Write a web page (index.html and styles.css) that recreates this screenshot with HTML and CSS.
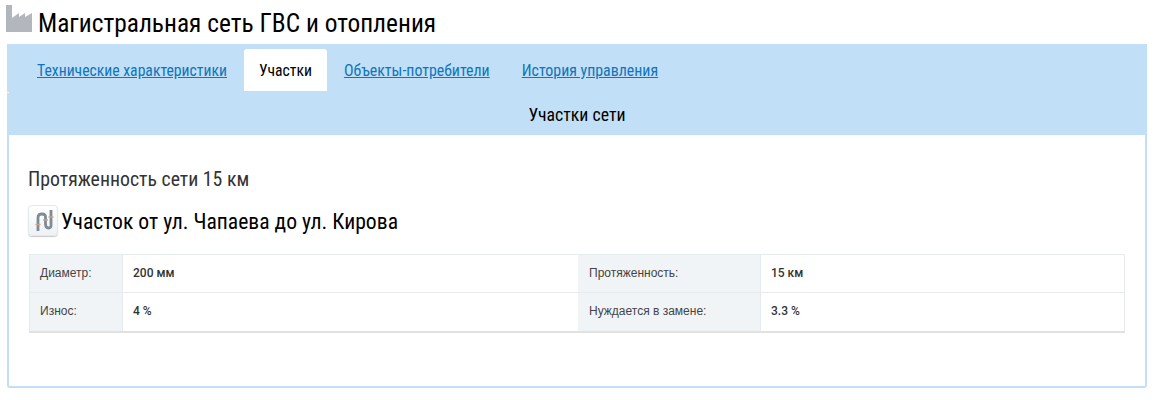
FILE: index.html
```html
<!DOCTYPE html>
<html lang="ru">
<head>
<meta charset="utf-8">
<title>Магистральная сеть ГВС и отопления</title>
<link rel="stylesheet" href="styles.css">
</head>
<body>
<header class="title">
  <svg class="factory" width="26" height="27" viewBox="0 0 26 27"><path fill="#b1b7bc" d="M0 0H6V13L13 8V12L19 8V12L26 8V27H0Z"/></svg>
  <h1>Магистральная сеть ГВС и отопления</h1>
</header>
<main class="panel">
  <nav class="tabs">
    <a class="tab" href="#">Технические характеристики</a>
    <span class="tab active">Участки</span>
    <a class="tab wide" href="#">Объекты-потребители</a>
    <a class="tab wide" href="#">История управления</a>
  </nav>
  <div class="band">Участки сети</div>
  <section class="content">
    <h2>Протяженность сети 15 км</h2>
    <div class="section-head">
      <span class="pipe"><svg width="22" height="24" viewBox="0 0 22 24" fill="none" stroke="#7d8b97" stroke-width="2.800"><path d="M6 22V9Q6 5 10 5T13.500 9V15Q13.500 19 16.500 19T19 15V1"/><path d="M3.500 15.500H8.500M11 11H16M16.500 8H21.500" stroke="#c9a488" stroke-width="1.500"/></svg></span>
      <h3>Участок от ул. Чапаева до ул. Кирова</h3>
    </div>
    <div class="info">
      <div class="k">Диаметр:</div><div class="v">200 мм</div><div class="k second">Протяженность:</div><div class="v">15 км</div>
      <div class="k">Износ:</div><div class="v">4 %</div><div class="k second">Нуждается в замене:</div><div class="v">3.3 %</div>
    </div>
  </section>
</main>
</body>
</html>
```
FILE: styles.css
```css
* { box-sizing: border-box; }
html, body { margin: 0; }
body { background: #fff; font-family: "Roboto Condensed", Roboto, sans-serif; color: #000; height: 400px; overflow: hidden; }
.title { display: flex; align-items: center; height: 44px; padding: 2px 0 0 6px; gap: 6px; }
.factory { flex: none; align-self: flex-start; margin-top: 3px; }
h1 { margin: 0; font-size: 25.4px; font-weight: 400; font-stretch: 75%; line-height: 36px; }
.panel { margin: 0 9px 0 7px; height: 344px; border: 2px solid #c1dff6; border-top: 0; border-radius: 0 0 3px 3px; }
.tabs { display: flex; gap: 2px; height: 49px; padding: 5px 0 0 15px; background: #c1dff6; margin: 0 -2px; }
.tab { display: block; height: 42px; line-height: 43px; padding: 0 15px; font-size: 15.7px; font-stretch: 75%; color: #0f75bc; }
.tab.wide { font-size: 15.9px; }
.tab.active { background: #fff; color: #000; border-radius: 3px 3px 0 0; }
.band { position: relative; height: 42px; margin: 0 -2px; background: #c1dff6; text-align: center; font-size: 17.8px; font-stretch: 75%; line-height: 44px; }
.band::before { content: ""; position: absolute; left: 0; top: -1px; width: 2px; height: 1px; background: #fff; }
.content { padding: 31px 20px 0 20px; margin-left: -1px; }
h2 { margin: 0; font-size: 19.8px; font-weight: 400; font-stretch: 75%; color: #333; line-height: 28px; }
.section-head { display: flex; align-items: center; gap: 3px; margin-top: 12px; height: 32px; }
.pipe { width: 30px; height: 31px; margin-top: -3px; display: flex; align-items: center; justify-content: center; border: 1px solid #e3e8ec; border-radius: 4px; background: linear-gradient(#fff, #eef2f5); box-shadow: 0 1px 1px #c9c9c9; }
h3 { margin: 0; font-size: 21.65px; font-weight: 400; font-stretch: 75%; line-height: 32px; }
.info { display: grid; grid-template-columns: 93px 455px 183px 1fr; margin: 16px 0 0 1px; border: 1px solid #e7ebef; border-bottom: 2px solid #dfe1e3; font-family: "Liberation Sans", sans-serif; font-size: 12px; }
.k, .v { height: 38px; line-height: 37px; padding-left: 10px; }
.k { background: #f1f4f7; color: #444; border-right: 1px solid #e7ebef; }
.k.second { padding-left: 11px; }
.v { font-family: Roboto, sans-serif; font-weight: 500; color: #333; }
.k:nth-child(-n+4), .v:nth-child(-n+4) { border-bottom: 1px solid #e7ebef; }
```
